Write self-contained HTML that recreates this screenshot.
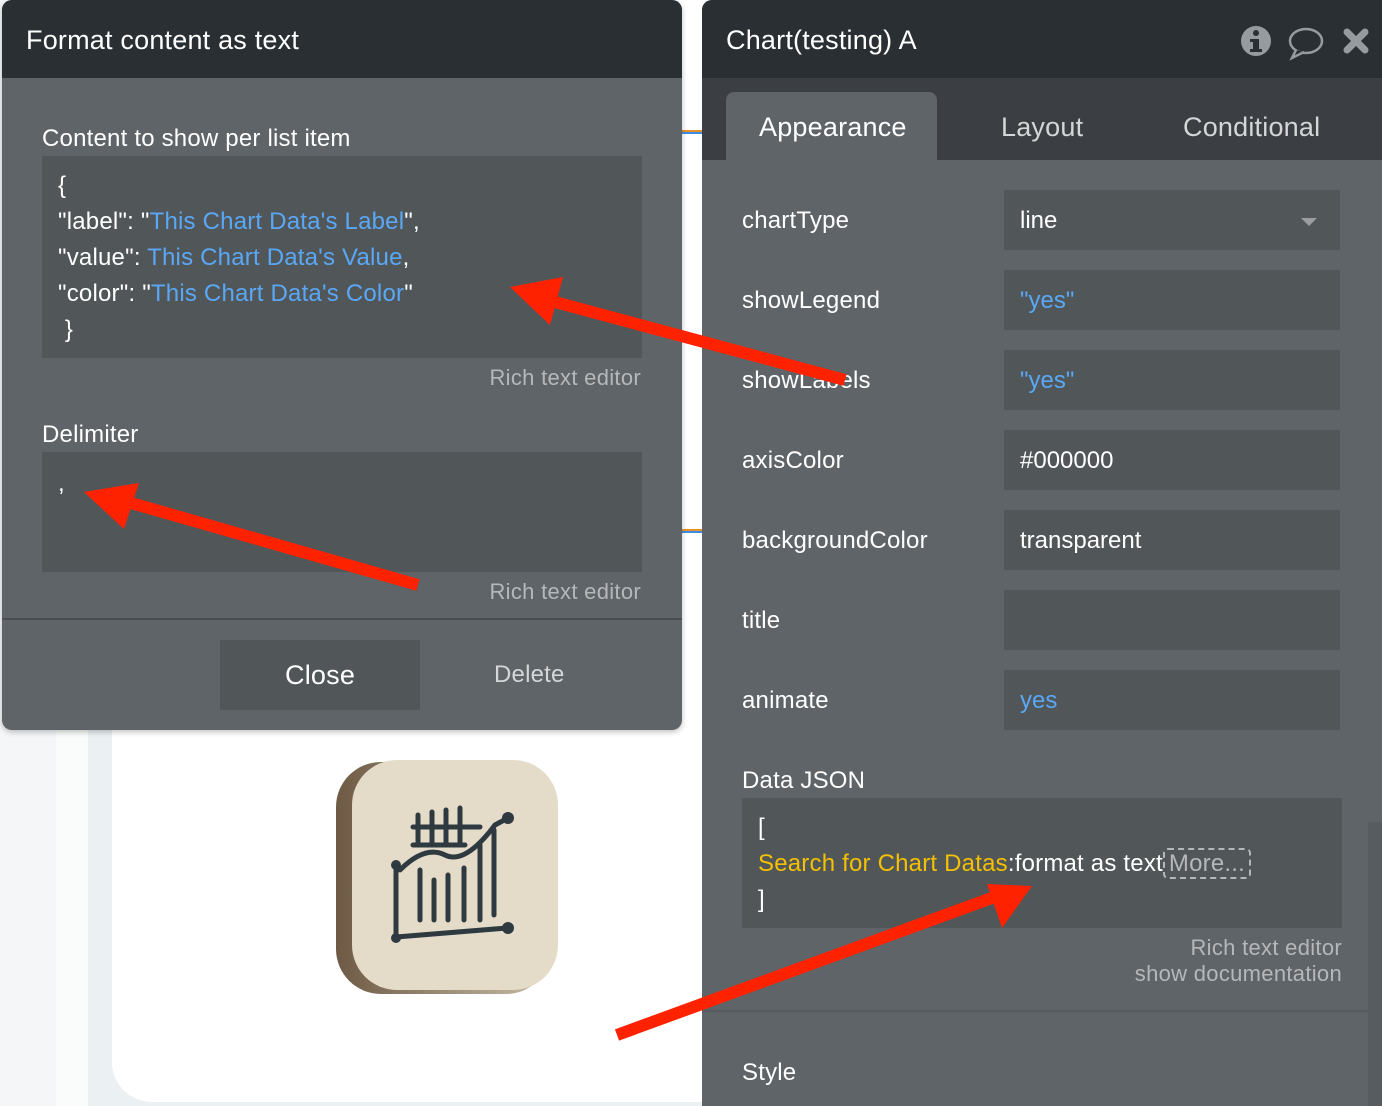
<!DOCTYPE html>
<html><head><meta charset="utf-8"><style>
*{box-sizing:border-box;margin:0;padding:0}
body{width:1382px;height:1106px;overflow:hidden;background:#f4f6f7;font-family:"Liberation Sans",sans-serif;position:relative}
.abs{position:absolute}
.t{color:#fff;font-size:24px;position:absolute;white-space:nowrap;letter-spacing:0.2px}
.g{color:#b5b8ba;font-size:22px;position:absolute;white-space:nowrap;letter-spacing:0.3px}
.b{color:#5aa8f5}
.inp{position:absolute;background:#515659;left:1004px;width:336px;height:60px;border-radius:2px}
.inp span{position:absolute;left:16px;top:17px;font-size:24px;color:#fff}
.inp span.b{color:#5aa8f5}
</style></head><body>
<div class="abs" style="left:56px;top:0;width:650px;height:1106px;background:#fafbfb"></div>
<div class="abs" style="left:88px;top:0;width:620px;height:1106px;background:#ebf0f3"></div>
<div class="abs" style="left:112px;top:0;width:596px;height:1102px;background:#fff;border-bottom-left-radius:40px"></div>
<div class="abs" style="left:682px;top:130px;width:22px;height:2px;background:#e8902a"></div>
<div class="abs" style="left:682px;top:132px;width:22px;height:2px;background:#3a8ee6"></div>
<div class="abs" style="left:682px;top:529px;width:22px;height:2px;background:#e8902a"></div>
<div class="abs" style="left:682px;top:531px;width:22px;height:2px;background:#3a8ee6"></div>

<svg class="abs" style="left:330px;top:750px" width="240" height="250" viewBox="0 0 240 250">
<defs><linearGradient id="sd" x1="0" x2="1"><stop offset="0" stop-color="#6e5a44"/><stop offset="1" stop-color="#c9bfa8"/></linearGradient></defs>
<rect x="6" y="12" width="215" height="232" rx="45" fill="url(#sd)"/>
<rect x="22" y="10" width="206" height="230" rx="45" fill="#e4dcc9"/>
<g stroke="#2e3a40" stroke-width="5" fill="none" stroke-linecap="round">
<path d="M88 65 V95 M102 62 V95 M116 60 V95 M130 58 V95 M83 77 H150 M83 95 H135"/>
<path d="M70 120 Q95 95 115 105 T165 75 L178 68"/>
<path d="M90 170 V120 M104 170 V130 M118 170 V125 M134 170 V118 M150 170 V95 M164 165 V80"/>
<path d="M66 115 V187 L177 178"/>
</g>
<circle cx="66" cy="115" r="5" fill="#2e3a40"/><circle cx="178" cy="68" r="6" fill="#2e3a40"/>
<circle cx="66" cy="188" r="5" fill="#2e3a40"/><circle cx="178" cy="178" r="6" fill="#2e3a40"/>
</svg>

<div class="abs" style="left:2px;top:0;width:680px;height:730px;background:#5f6468;border-radius:10px;box-shadow:0 2px 6px rgba(0,0,0,.25);overflow:hidden">
 <div class="abs" style="left:0;top:0;width:680px;height:78px;background:#292f32"></div>
</div>
<div class="t" style="left:26px;top:25px;font-size:27px">Format content as text</div>
<div class="t" style="left:42px;top:125px">Content to show per list item</div>
<div class="abs" style="left:42px;top:156px;width:600px;height:202px;background:#515659"></div>
<div class="t" style="left:58px;top:168px;line-height:36px">{<br>"label": "<span class="b">This Chart Data's Label</span>",<br>"value": <span class="b">This Chart Data's Value</span>,<br>"color": "<span class="b">This Chart Data's Color</span>"<br>&nbsp;}</div>
<div class="g" style="right:741px;top:365px">Rich text editor</div>
<div class="t" style="left:42px;top:421px">Delimiter</div>
<div class="abs" style="left:42px;top:452px;width:600px;height:120px;background:#515659"></div>
<div class="t" style="left:58px;top:470px">,</div>
<div class="g" style="right:741px;top:579px">Rich text editor</div>
<div class="abs" style="left:2px;top:618px;width:680px;height:2px;background:#4a4e52"></div>
<div class="abs" style="left:220px;top:640px;width:200px;height:70px;background:#515659"></div>
<div class="t" style="left:285px;top:660px;font-size:27px">Close</div>
<div class="t" style="left:494px;top:661px;color:#d4d6d7;font-size:24px">Delete</div>

<div class="abs" style="left:702px;top:0;width:680px;height:1106px;background:#5f6468;border-top-left-radius:10px;overflow:hidden">
 <div class="abs" style="left:0;top:0;width:680px;height:78px;background:#292f32"></div>
 <div class="abs" style="left:0;top:78px;width:680px;height:82px;background:#3b3f43"></div>
 <div class="abs" style="left:24px;top:92px;width:211px;height:68px;background:#5f6468;border-radius:8px 8px 0 0"></div>
 <div class="abs" style="left:666px;top:160px;width:14px;height:946px;background:#575c60"></div>
 <div class="abs" style="left:666px;top:160px;width:14px;height:662px;background:#5f6468"></div>
 <div class="abs" style="left:0;top:1010px;width:666px;height:2px;background:#575b5f"></div>
</div>
<div class="t" style="left:726px;top:25px;font-size:27px">Chart(testing) A</div>
<svg class="abs" style="left:1240px;top:25px" width="140" height="36">
<circle cx="16" cy="16" r="15" fill="#959b9e"/><rect x="13" y="14" width="6" height="11" fill="#292f32"/><rect x="10" y="24" width="12" height="3" fill="#292f32"/><rect x="10" y="14" width="6" height="3" fill="#292f32"/><circle cx="16" cy="8" r="3" fill="#292f32"/>
<ellipse cx="66" cy="16" rx="16" ry="12" fill="none" stroke="#959b9e" stroke-width="2.5"/><path d="M56 25 L52 33 L64 27" fill="#292f32" stroke="#959b9e" stroke-width="2.5"/>
<path d="M107 7 L125 25 M125 7 L107 25" stroke="#959b9e" stroke-width="7" stroke-linecap="round"/>
</svg>
<div class="t" style="left:759px;top:112px;font-size:27px">Appearance</div>
<div class="t" style="left:1001px;top:112px;font-size:27px;color:#d4d6d7">Layout</div>
<div class="t" style="left:1183px;top:112px;font-size:27px;color:#d4d6d7">Conditional</div>

<div class="t" style="left:742px;top:207px">chartType</div>
<div class="inp" style="top:190px"><span>line</span></div>
<div class="abs" style="left:1301px;top:218px;width:0;height:0;border-left:8px solid transparent;border-right:8px solid transparent;border-top:8px solid #9a9ea1"></div>
<div class="t" style="left:742px;top:287px">showLegend</div>
<div class="inp" style="top:270px"><span class="b">"yes"</span></div>
<div class="t" style="left:742px;top:367px">showLabels</div>
<div class="inp" style="top:350px"><span class="b">"yes"</span></div>
<div class="t" style="left:742px;top:447px">axisColor</div>
<div class="inp" style="top:430px"><span>#000000</span></div>
<div class="t" style="left:742px;top:527px">backgroundColor</div>
<div class="inp" style="top:510px"><span>transparent</span></div>
<div class="t" style="left:742px;top:607px">title</div>
<div class="inp" style="top:590px"></div>
<div class="t" style="left:742px;top:687px">animate</div>
<div class="inp" style="top:670px"><span class="b">yes</span></div>

<div class="t" style="left:742px;top:767px">Data JSON</div>
<div class="abs" style="left:742px;top:798px;width:600px;height:130px;background:#515659"></div>
<div class="t" style="left:758px;top:810px;line-height:36px">[<br><span style="color:#f5c000">Search for Chart Datas</span>:format as text<span style="color:#b5b8ba;border:2px dashed #b5b8ba;border-radius:5px;padding:0 4px">More...</span><br>]</div>
<div class="g" style="right:40px;top:935px">Rich text editor</div>
<div class="g" style="right:40px;top:961px">show documentation</div>
<div class="t" style="left:742px;top:1059px">Style</div>

<svg class="abs" style="left:0;top:0" width="1382" height="1106">
<g fill="#ff2200" stroke="#ff2200">
<line x1="845" y1="380" x2="540" y2="298" stroke-width="12"/>
<polygon points="510,287 563,277 550,325" stroke="none"/>
<line x1="418" y1="585" x2="110" y2="497" stroke-width="12"/>
<polygon points="84,492 139,483 124,529" stroke="none"/>
<line x1="617" y1="1035" x2="1000" y2="895" stroke-width="12"/>
<polygon points="1032,886 987,884 1002,928" stroke="none"/>
</g>
</svg>
</body></html>
